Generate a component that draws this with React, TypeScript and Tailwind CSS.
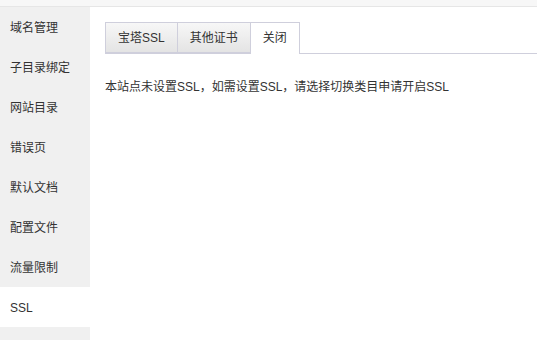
const menuItems = ['域名管理', '子目录绑定', '网站目录', '错误页', '默认文档', '配置文件', '流量限制', 'SSL'];
const tabs = ['宝塔SSL', '其他证书', '关闭'];

export default function App() {
  const active = 'SSL';
  const activeTab = '关闭';

  return (
    <div
      className="w-[537px] h-[340px] overflow-hidden bg-white text-[12px] text-[#333]"
      style={{ fontFamily: '"Liberation Sans", "Noto Sans CJK SC", sans-serif' }}
    >
      <div className="h-[7px] bg-[#f7f7f7] border-b border-[#e6e6e6]" />
      <div className="flex h-[333px]">
        <div className="w-[90px] shrink-0 bg-[#f0f0f0]">
          {menuItems.map((item) => (
            <div
              key={item}
              className={`h-10 leading-[42px] pl-[10px] ${item === active ? 'bg-white' : ''}`}
            >
              {item}
            </div>
          ))}
        </div>
        <div className="flex-1 pl-[15px] pt-[15px]">
          <div className="flex border-b border-[#cfcfdc] h-[32px]">
            {tabs.map((tab) =>
              tab === activeTab ? (
                <div
                  key={tab}
                  className="h-[32px] px-3 leading-[31px] bg-white border border-b-0 border-[#cfcfdc] -ml-px"
                >
                  {tab}
                </div>
              ) : (
                <div
                  key={tab}
                  className="h-[31px] px-3 leading-[30px] bg-gradient-to-b from-[#f7f7f7] to-[#e4e4e4] border border-[#cfcfdc] [&:not(:first-child)]:-ml-px"
                >
                  {tab}
                </div>
              )
            )}
          </div>
          <p className="mt-[25px] leading-4">本站点未设置SSL，如需设置SSL，请选择切换类目申请开启SSL</p>
        </div>
      </div>
    </div>
  );
}
